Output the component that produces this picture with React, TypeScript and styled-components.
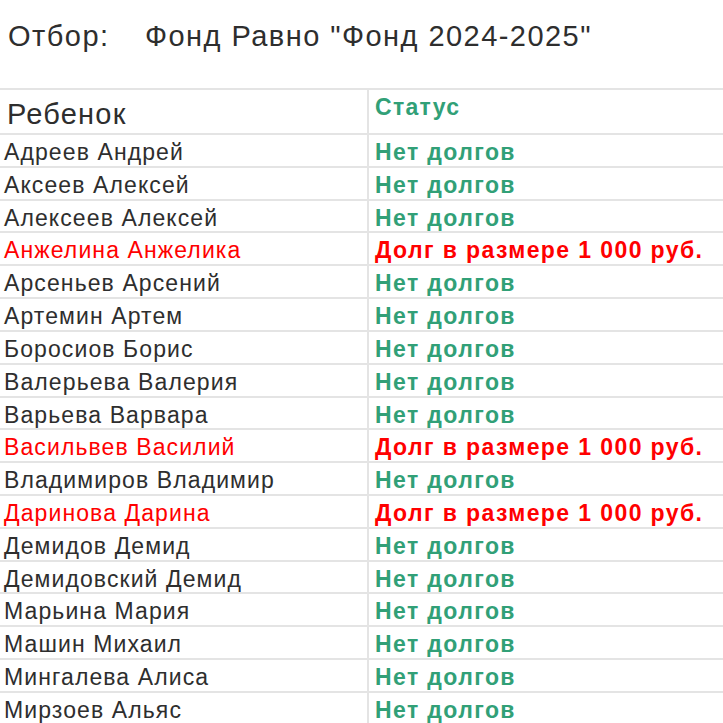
import React from 'react';
import styled, { createGlobalStyle } from 'styled-components';

type Child = { name: string; debt?: boolean };

const children: Child[] = [
    { name: 'Адреев Андрей' },
    { name: 'Аксеев Алексей' },
    { name: 'Алексеев Алексей' },
    { name: 'Анжелина Анжелика', debt: true },
    { name: 'Арсеньев Арсений' },
    { name: 'Артемин Артем' },
    { name: 'Боросиов Борис' },
    { name: 'Валерьева Валерия' },
    { name: 'Варьева Варвара' },
    { name: 'Васильвев Василий', debt: true },
    { name: 'Владимиров Владимир' },
    { name: 'Даринова Дарина', debt: true },
    { name: 'Демидов Демид' },
    { name: 'Демидовский Демид' },
    { name: 'Марьина Мария' },
    { name: 'Машин Михаил' },
    { name: 'Мингалева Алиса' },
    { name: 'Мирзоев Альяс' },
];

const App: React.FC = () => {
    return (
        <Page>
            <Global />
            <Filter>
                <FilterLabel>Отбор:</FilterLabel>
                <FilterValue>Фонд Равно "Фонд 2024-2025"</FilterValue>
            </Filter>

            <Table>
                <HeadRow>
                    <HeadCell>Ребенок</HeadCell>
                    <StatusHead>Статус</StatusHead>
                </HeadRow>
                {children.map((c) => (
                    <Row key={c.name}>
                        <NameCell $debt={c.debt}>{c.name}</NameCell>
                        <StatusCell $debt={c.debt}>
                            {c.debt ? 'Долг в размере 1 000 руб.' : 'Нет долгов'}
                        </StatusCell>
                    </Row>
                ))}
            </Table>
        </Page>
    );
};

const Global = createGlobalStyle`
    html, body {
        margin: 0;
        padding: 0;
        background: #ffffff;
        overflow: hidden;
    }
`;

const Page = styled.div`
    width: 723px;
    height: 723px;
    overflow: hidden;
    font-family: "Liberation Sans", Arial, sans-serif;
    color: #2e2e2e;
`;

const Filter = styled.div`
    display: flex;
    align-items: center;
    height: 88px;
    padding: 0 0 15px 8px;
    box-sizing: border-box;
    font-size: 29px;
    letter-spacing: 1.45px;
`;

const FilterLabel = styled.div`
    width: 137px;
`;

const FilterValue = styled.div`
    white-space: nowrap;
`;

const Table = styled.div`
    border-top: 2px solid #e4e4e4;
    width: 760px;
`;

const HeadRow = styled.div`
    display: grid;
    grid-template-columns: 369px 1fr;
    height: 45px;
    box-sizing: border-box;
    border-bottom: 2px solid #e4e4e4;
`;

const HeadCell = styled.div`
    border-right: 2px solid #e4e4e4;
    padding: 6px 0 0 7px;
    font-size: 29px;
    letter-spacing: 1.2px;
    line-height: 36px;
`;

const StatusHead = styled.div`
    padding: 4px 0 0 6px;
    font-size: 23px;
    font-weight: bold;
    letter-spacing: 1.3px;
    line-height: 26px;
    color: #31a077;
`;

const Row = styled.div`
    display: grid;
    grid-template-columns: 369px 1fr;
    height: 32.82px;
    box-sizing: border-box;
    border-bottom: 2px solid #e4e4e4;
`;

const NameCell = styled.div<{ $debt?: boolean }>`
    border-right: 2px solid #e4e4e4;
    padding: 2px 0 0 4px;
    font-size: 23px;
    letter-spacing: 1.1px;
    line-height: 30px;
    white-space: nowrap;
    color: ${(p) => (p.$debt ? '#ff0000' : '#2e2e2e')};
`;

const StatusCell = styled.div<{ $debt?: boolean }>`
    padding: 2px 0 0 6px;
    font-size: 23px;
    font-weight: bold;
    letter-spacing: ${(p) => (p.$debt ? '1.4px' : '1.4px')};
    line-height: 30px;
    white-space: nowrap;
    color: ${(p) => (p.$debt ? '#ff0000' : '#31a077')};
`;

export default App;
